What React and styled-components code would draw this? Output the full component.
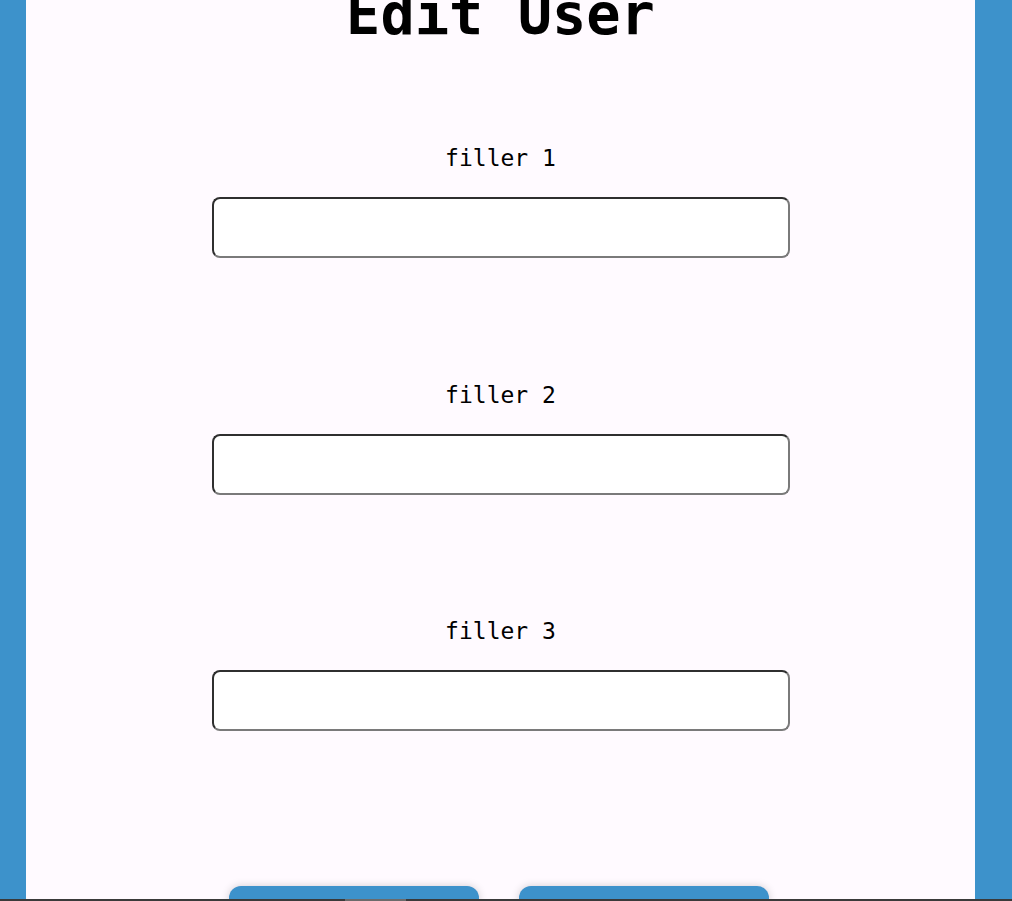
import React from "react";
import styled, { createGlobalStyle } from "styled-components";

const GlobalStyle = createGlobalStyle`
  html, body {
    margin: 0;
    padding: 0;
    background: #3d92cb;
    overflow: hidden;
  }
  * { box-sizing: border-box; }
`;

const fields = ["filler 1", "filler 2", "filler 3"];

const EditUser = () => {
  return (
    <>
      <GlobalStyle />
      <Page>
        <Panel>
          <Title>Edit User</Title>

          {fields.map((name, i) => (
            <Field key={name} $last={i === fields.length - 1}>
              <Label htmlFor={`f${i}`}>{name}</Label>
              <Input id={`f${i}`} type="text" />
            </Field>
          ))}

          <ButtonRow>
            <Button>Save</Button>
            <Button>Cancel</Button>
          </ButtonRow>
        </Panel>
      </Page>
      <BottomBar>
        <Thumb />
      </BottomBar>
    </>
  );
};

const Page = styled.div`
  display: flex;
  min-height: 100vh;
  padding: 0 37px 0 26px;
  font-family: "DejaVu Sans Mono", monospace;
  color: #000;
`;

const Panel = styled.main`
  flex: 1;
  background: #fffaff;
  display: flex;
  flex-direction: column;
  align-items: center;
`;

const Title = styled.h1`
  margin: -19px 0 98px;
  font-size: 57px;
  font-weight: 700;
  line-height: normal;
`;

const Field = styled.div`
  display: flex;
  flex-direction: column;
  align-items: center;
  gap: 26px;
  margin-bottom: ${({ $last }) => ($last ? "155px" : "123.5px")};
`;

const Label = styled.label`
  font-size: 23px;
  line-height: normal;
`;

const Input = styled.input`
  width: 578px;
  height: 61px;
  background: #fff;
  border: 2px solid;
  border-color: #2f2f2f #7a7a7a #7a7a7a #2f2f2f;
  border-radius: 8px;
  font: inherit;
  font-size: 20px;
  padding: 0 12px;
  outline: none;
`;

const ButtonRow = styled.div`
  display: flex;
  gap: 40px;
  margin-left: -3px;
`;

const Button = styled.button`
  width: 250px;
  height: 52px;
  background: #3d92cb;
  color: #fff;
  border: none;
  border-radius: 12px;
  box-shadow: 0 0 8px rgba(0, 0, 0, 0.18);
  font: inherit;
  font-size: 20px;
  cursor: pointer;
`;

/* thin strip at the very bottom of the viewport */
const BottomBar = styled.div`
  position: fixed;
  left: 0;
  right: 0;
  bottom: 0;
  height: 2px;
  background: #3a3a3a;
`;

const Thumb = styled.div`
  position: absolute;
  left: 345px;
  width: 61px;
  height: 100%;
  background: #6b6b6b;
`;

export default EditUser;
